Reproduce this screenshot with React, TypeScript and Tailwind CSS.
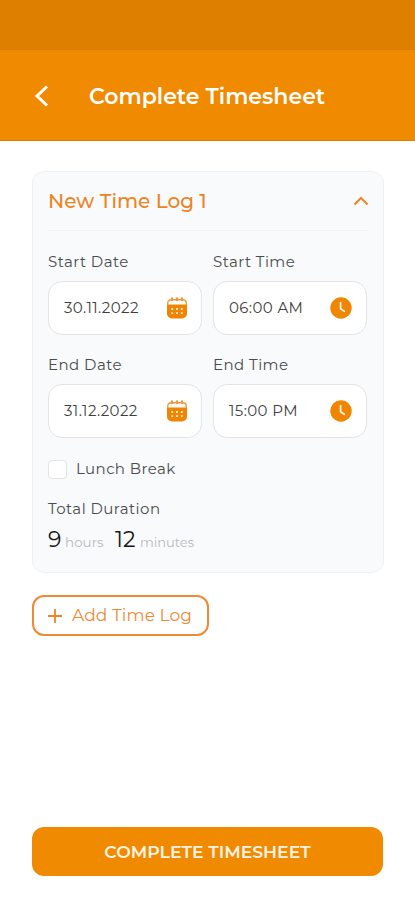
import { ReactNode } from "react";

function CalendarIcon() {
  return (
    <svg width="20" height="22" viewBox="0 0 20 22" fill="none">
      <path d="M0 7.500h20v9a5 5 0 0 1-5 5H5a5 5 0 0 1-5-5z" fill="#ef8500" />
      <path d="M.7 8V6.200A3.400 3.400 0 0 1 4.100 2.800h11.800a3.400 3.400 0 0 1 3.400 3.400V8" stroke="#f09a40" strokeWidth="1.400" />
      <path d="M5 1.500v1.600M10 1.500v1.600M15 1.500v1.600" stroke="#f09a40" strokeWidth="2.400" strokeLinecap="round" />
      <path d="M4.200 12h2M9 12h2M13.800 12h2M4.200 16.200h2M9 16.200h2M13.800 16.200h2" stroke="#ffe3c2" strokeWidth="1.800" />
    </svg>
  );
}

function ClockIcon() {
  return (
    <svg width="22" height="22" viewBox="0 0 22 22" fill="none">
      <circle cx="11" cy="11" r="10.700" fill="#ef8500" />
      <path d="M10.600 5.600v6.200l3.700 2.400" stroke="#fff3e4" strokeWidth="1.800" strokeLinecap="round" strokeLinejoin="round" />
    </svg>
  );
}

function Field({ label, value, icon }: { label: string; value: string; icon: ReactNode }) {
  return (
    <div>
      <div className="h-5 text-[15px] leading-5 tracking-[0.45px] text-[#4b4b4d]">{label}</div>
      <div className="mt-[9px] flex h-[54px] items-center justify-between rounded-[14px] border border-[#e3e4e6] bg-white pr-[14px] pl-[15px]">
        <span className="pt-px text-[15px] tracking-[0.4px] text-[#3f3f41]">{value}</span>
        {icon}
      </div>
    </div>
  );
}

export default function App() {
  return (
    <div className="flex h-[900px] w-[415px] flex-col bg-white font-['Montserrat','Inter',sans-serif]">
      <div className="h-[50px] shrink-0 bg-[#de7f00]" />

      <header className="flex h-[91px] shrink-0 items-center border-b border-[#e67e00] bg-[#f08a00] pt-px pl-[34px] text-white">
        <svg width="15" height="22" viewBox="0 0 15 22" fill="none">
          <path d="M13 1.500 3 11l10 9.500" stroke="#fff" strokeWidth="3" />
        </svg>
        <h1 className="mt-px ml-10 text-[22px] font-semibold whitespace-nowrap">Complete Timesheet</h1>
      </header>

      <main className="flex flex-1 flex-col px-8 pt-[30px] pb-6">
        <section className="h-[402px] w-[352px] shrink-0 rounded-xl border border-[#eef0f2] bg-[#f8fafc] px-[15px]">
          <div className="flex h-[59px] items-center justify-between border-b border-[#f0f2f4]">
            <h2 className="text-[20px] font-medium text-[#ec8424]">New Time Log 1</h2>
            <svg className="-mr-[1px]" width="16" height="10" viewBox="0 0 16 10" fill="none">
              <path d="m1.500 8.500 6.500-6.500 6.500 6.500" stroke="#ec8424" strokeWidth="2" />
            </svg>
          </div>

          <div className="mt-[21px] grid grid-cols-[154px_154px] gap-x-[11px] gap-y-5">
            <Field label="Start Date" value="30.11.2022" icon={<CalendarIcon />} />
            <Field label="Start Time" value="06:00 AM" icon={<ClockIcon />} />
            <Field label="End Date" value="31.12.2022" icon={<CalendarIcon />} />
            <Field label="End Time" value="15:00 PM" icon={<ClockIcon />} />
          </div>

          <label className="mt-[21px] flex h-5 items-center gap-[9px] text-[15px] tracking-[0.4px] text-[#4b4b4d]">
            <span className="h-[19px] w-[19px] rounded-[4px] border border-[#e3e4e6] bg-white" />
            <span className="pt-px">Lunch Break</span>
          </label>

          <div className="mt-5 text-[15px] leading-5 tracking-[0.45px] text-[#4b4b4d]">Total Duration</div>
          <div className="mt-[7px] flex items-baseline leading-7 text-[#161616]">
            <span className="w-[17px] text-[22px]">9</span>
            <span className="w-[50px] text-[13.500px] text-[#b9bbbe]">hours</span>
            <span className="w-[25px] text-[22px]">12</span>
            <span className="text-[13px] text-[#b9bbbe]">minutes</span>
          </div>
        </section>

        <button className="mt-[22px] flex h-[41px] w-[177px] shrink-0 items-center rounded-xl border-2 border-[#ec8a35] pl-[13px] text-[17px] tracking-[0.1px] whitespace-nowrap text-[#ec8a35]">
          <svg className="mr-[9px]" width="16" height="16" viewBox="0 0 16 16" fill="none">
            <path d="M8 1v14M1 8h14" stroke="#ec8424" strokeWidth="1.800" />
          </svg>
          Add Time Log
        </button>

        <button className="mt-auto h-[49px] w-[351px] shrink-0 rounded-xl bg-[#f08a00] pt-px text-[17.300px] font-semibold text-[#fff3e4]">
          COMPLETE TIMESHEET
        </button>
      </main>
    </div>
  );
}
